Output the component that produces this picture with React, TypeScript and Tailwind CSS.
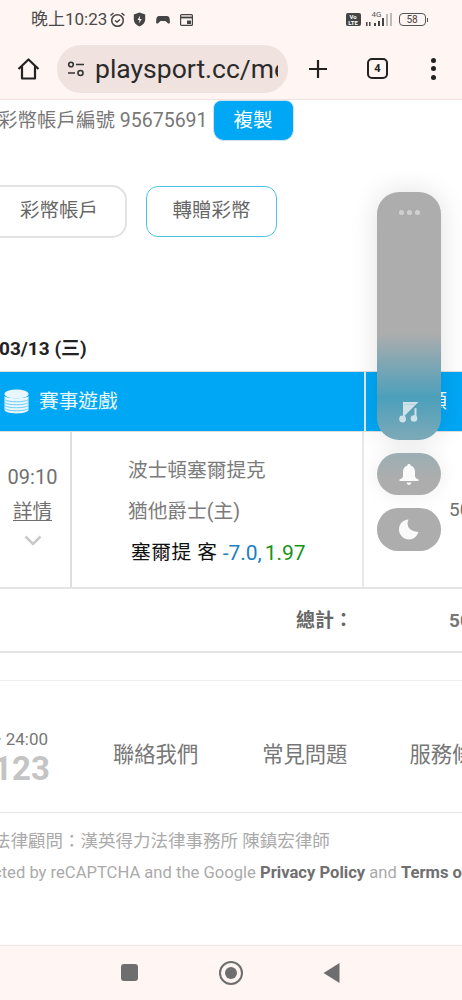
const font = "font-['Roboto','Noto_Sans_CJK_TC',sans-serif]"

function StatusBar() {
  return (
    <div className="flex h-[40px] items-center bg-[#fff5f2] pb-[1px] pl-[31px] pr-[34px] text-[#4a4a4a]">
      <span className="text-[17px] leading-none">晚上10:23</span>
      <svg className="ml-[2px]" width="17" height="17" viewBox="0 0 17 17" fill="none" stroke="#444" strokeWidth="1.5">
        <circle cx="8.5" cy="9.5" r="5.8" />
        <path d="M6 9.5l2 1.6 3-2.6M1.5 4.5L4.5 2M15.5 4.5L12.5 2" />
      </svg>
      <svg className="ml-[7px]" width="13" height="15" viewBox="0 0 13 15">
        <path d="M6.5 .5l5.7 2v5c0 3.3-2.4 5.7-5.7 7-3.3-1.3-5.700-3.700-5.700-7v-5z" fill="#444" />
        <path d="M7.200 3.500L4.500 8h2l-.7 3.500L8.800 7H6.700z" fill="#fff5f2" />
      </svg>
      <svg className="ml-[10px]" width="14" height="10" viewBox="0 0 14 10">
        <path d="M3 1h8c1.400 0 2.300 1 2.600 2.600l.3 3.400c.1 1.600-1.400 2-2.300 1L9.500 6H4.500L2.400 8c-.9 1-2.400.6-2.300-1l.3-3.400C.7 2 1.600 1 3 1z" fill="#444" />
      </svg>
      <svg className="ml-[10px]" width="13" height="12" viewBox="0 0 13 12" fill="none" stroke="#444" strokeWidth="1.200">
        <rect x=".6" y=".6" width="11.800" height="10.800" rx="1" />
        <path d="M.6 3.500h11.800" strokeWidth="1.800" />
        <path d="M7 6.500h4v3.500H7z" fill="#444" stroke="none" />
      </svg>
      <div className="ml-auto flex items-center">
        <div className="flex h-[13px] w-[15px] flex-col items-center justify-center rounded-[2px] bg-[#444] text-[6px] font-bold leading-[6px] text-white">
          <span>Vo</span>
          <span>LTE</span>
        </div>
        <div className="relative ml-[5px] h-[15px] w-[28px]">
          <span className="absolute left-[6px] top-[-2px] text-[8px] leading-[9px] text-[#555]">4G</span>
          <svg className="absolute bottom-0 left-0" width="28" height="14" viewBox="0 0 28 14" fill="#444">
            <rect x="0" y="9" width="1.500" height="4" />
            <rect x="3" y="9" width="1.500" height="4" />
            <rect x="8" y="10" width="2" height="3" />
            <rect x="12" y="8" width="2" height="5" />
            <rect x="16" y="5" width="2" height="8" />
            <rect x="20" y="1" width="2" height="12" fill="#bbb" />
            <rect x="24" y="0" width="2" height="13" fill="#bbb" />
          </svg>
        </div>
        <div className="ml-[5px] flex h-[13px] w-[27px] items-center justify-center rounded-[4px] border border-[#555] text-[10px] leading-none text-[#444]">
          58
        </div>
        <div className="ml-[1px] h-[4px] w-[1.500px] bg-[#555]" />
      </div>
    </div>
  )
}

function BrowserBar() {
  return (
    <div className="flex h-[60px] items-center border-b border-[#f0dfdc] bg-[#fff5f2] pb-[2px]">
      <svg className="ml-[17px] shrink-0" width="23" height="22" viewBox="0 0 23 22" fill="none" stroke="#222" strokeWidth="2.200" strokeLinejoin="round">
        <path d="M1.500 11L11.500 1.500 21.500 11M5 8v12.500h13V8" />
      </svg>
      <div className="ml-[17px] flex h-[48px] w-[231px] shrink-0 items-center overflow-hidden rounded-full bg-[#f0e2df] pl-[10px] pr-[10px]">
        <svg className="shrink-0" width="18" height="16" viewBox="0 0 18 16" fill="none" stroke="#333" strokeWidth="1.600">
          <circle cx="4" cy="3.500" r="2.300" />
          <path d="M9 3.500h8M1 12h7" />
          <circle cx="13.500" cy="12" r="2.500" />
        </svg>
        <div className="ml-[10px] overflow-hidden whitespace-nowrap text-[26.500px] leading-[34px] text-[#2a2a2a]">
          playsport.cc/member
        </div>
      </div>
      <svg className="ml-[20px] shrink-0" width="20" height="20" viewBox="0 0 20 20" stroke="#222" strokeWidth="2.200">
        <path d="M10 1v18M1 10h18" />
      </svg>
      <div className="ml-[39px] flex h-[21px] w-[21px] shrink-0 items-center justify-center rounded-[5px] border-2 border-[#222] text-[11px] font-bold leading-none text-[#222]">
        4
      </div>
      <div className="ml-[43px] flex shrink-0 flex-col gap-[3.500px]">
        <span className="h-[5px] w-[5px] rounded-full bg-[#222]" />
        <span className="h-[5px] w-[5px] rounded-full bg-[#222]" />
        <span className="h-[5px] w-[5px] rounded-full bg-[#222]" />
      </div>
    </div>
  )
}

function AccountRow() {
  return (
    <div className="flex h-[41px] items-center whitespace-nowrap">
      <span className="-ml-[2px] text-[19.500px] leading-[28px] text-[#777]">彩幣帳戶編號 95675691</span>
      <button className="ml-[5px] h-[41px] w-[81px] shrink-0 rounded-b-[11px] rounded-t-[8px] border border-[#cfe4ee] bg-[#00a7f5] text-[19.500px] leading-none text-white">
        複製
      </button>
    </div>
  )
}

function Tabs() {
  return (
    <div className="mt-[43px] flex h-[54px] items-center">
      <div className="-ml-[16px] flex h-[53px] w-[143px] shrink-0 items-center justify-center rounded-[15px] border-2 border-[#e2e2e2] pl-[7px] text-[19.500px] text-[#666]">
        彩幣帳戶
      </div>
      <div className="ml-[19px] flex h-[51px] w-[131px] shrink-0 items-center justify-center rounded-[12px] border border-[#4cc2e6] text-[19.500px] text-[#666]">
        轉贈彩幣
      </div>
    </div>
  )
}

function GameTable() {
  return (
    <div className="w-[520px]">
      <div className="flex h-[61px] items-center border-y border-[#dedede] bg-[#00a7f5]">
        <div className="flex w-[364px] items-center pl-[4px]">
          <svg width="25" height="25" viewBox="0 0 25 25">
            <ellipse cx="12.500" cy="5" rx="12" ry="4.500" fill="#e8f7ff" />
            <path d="M.5 7c1 3 23 3 24 0v14c-1 4.500-23 4.500-24 0z" fill="#e8f7ff" />
            <path d="M.5 10.500c3 3 21 3 24 0M.5 13.500c3 3 21 3 24 0M.5 16.500c3 3 21 3 24 0M.5 19.500c3 3 21 3 24 0" fill="none" stroke="#6ccdf8" strokeWidth="1" />
          </svg>
          <span className="ml-[10px] text-[19.700px] leading-none text-[#e9f8ff]">賽事遊戲</span>
        </div>
        <div className="h-full w-[2px] bg-[#dfe7ea]" />
        <span className="ml-[43px] text-[19px] leading-none text-white">金額</span>
      </div>
      <div className="flex h-[157px] border-b-2 border-[#e4e4e4]">
        <div className="flex w-[72px] flex-col items-center border-r-2 border-[#dfdfdf] pr-[5px] pt-[31px]">
          <span className="text-[20px] leading-[28px] text-[#707070]">09:10</span>
          <span className="mt-[8px] text-[19.500px] leading-[26px] text-[#707070] underline underline-offset-2">詳情</span>
          <svg className="mt-[10px]" width="18" height="11" viewBox="0 0 18 11" fill="none" stroke="#c9c9c9" strokeWidth="2.500">
            <path d="M1.500 1.500L9 9l7.500-7.500" />
          </svg>
        </div>
        <div className="flex w-[292px] flex-col border-r-2 border-[#e8e8e8] pl-[56px] pt-[25px] text-[19.700px]">
          <span className="leading-[28px] text-[#7b7b7b]">波士頓塞爾提克</span>
          <span className="mt-[13px] leading-[28px] text-[#7b7b7b]">猶他爵士(主)</span>
          <div className="ml-[3px] mt-[13px] flex items-center leading-[28px]">
            <span className="tracking-[0.6px] text-[#111]">塞爾提 客</span>
            <span className="ml-[5px] text-[21px] text-[#1b80c4]">-7.0,</span>
            <span className="ml-[3px] text-[21px] text-[#179317]">1.97</span>
          </div>
        </div>
        <div className="pl-[85px] pt-[64px] text-[19px] leading-[28px] text-[#707070]">500</div>
      </div>
      <div className="flex h-[64px] items-center border-b-2 border-[#e4e4e4]">
        <span className="ml-[296px] text-[19px] font-bold leading-none text-[#666]">總計：</span>
        <span className="ml-[96px] text-[19px] font-bold leading-none text-[#777]">500</span>
      </div>
    </div>
  )
}

function Footer() {
  return (
    <div className="mt-[27px] border-t border-[#efefef]">
      <div className="flex h-[132px] items-center border-b border-[#e6e6e6] pt-[16px] whitespace-nowrap">
        <div className="flex w-[50px] shrink-0 flex-col items-end overflow-hidden pt-[4px]">
          <span className="mr-[2px] text-[17px] leading-[22px] text-[#777]">~ 24:00</span>
          <span className="mt-[2px] text-[33px] font-bold leading-[34px] text-[#c4c4c4]">123</span>
        </div>
        <span className="ml-[63px] shrink-0 text-[21.300px] leading-none text-[#777]">聯絡我們</span>
        <span className="ml-[64px] shrink-0 text-[21.300px] leading-none text-[#777]">常見問題</span>
        <span className="ml-[62px] shrink-0 text-[21.300px] leading-none text-[#777]">服務條款</span>
      </div>
      <div className="-ml-[7px] mt-[17px] whitespace-nowrap text-[17.500px] leading-[22px] text-[#aaaaaa]">法律顧問：漢英得力法律事務所 陳鎮宏律師</div>
      <div className="-ml-[7px] mt-[9px] whitespace-nowrap text-[16.600px] leading-[24px] text-[#aaaaaa]">
        cted by reCAPTCHA and the Google <b className="text-[#707070]">Privacy Policy</b> and <b className="text-[#707070]">Terms of Service</b>
      </div>
    </div>
  )
}

function FloatingTools() {
  return (
    <div className="absolute left-[377px] top-[192px] flex w-[64px] flex-col gap-[13px]">
      <div className="flex h-[248px] flex-col items-center justify-between rounded-[22px] bg-[linear-gradient(180deg,#adadad_0%,#adadad_57%,#4b9fbb_83%,#7eaab7_100%)] pb-[17px] pt-[18px] shadow-[0_0_28px_rgba(0,0,0,0.12)]">
        <div className="flex gap-[3px]">
          <span className="h-[5px] w-[5px] rounded-full bg-[#d0d0d0]" />
          <span className="h-[5px] w-[5px] rounded-full bg-[#d0d0d0]" />
          <span className="h-[5px] w-[5px] rounded-full bg-[#d0d0d0]" />
        </div>
        <svg width="21" height="22" viewBox="0 0 21 22" fill="#cfe2e8">
          <path d="M4 1h15.500L4.600 15.800A3.300 3.300 0 0 0 4 15.700z" />
          <circle cx="3.600" cy="18" r="3.400" />
          <path d="M5 3.500h11.500" stroke="#b5d5de" strokeWidth="1" />
          <path d="M16.500 7.200V15.500" stroke="#cfe2e8" strokeWidth="2" />
          <circle cx="15" cy="17.500" r="3.300" />
        </svg>
      </div>
      <div className="flex h-[42px] items-center justify-center rounded-[21px] bg-[linear-gradient(180deg,#9aaeb4_0%,#adadad_60%)] shadow-[0_0_20px_rgba(0,0,0,0.08)]">
        <svg width="20" height="21" viewBox="0 0 20 21" fill="#fafafa">
          <path d="M10 0c1 0 1.700.7 1.800 1.700 2.800.8 4.200 3 4.200 6V12c0 1.200.8 2.300 3.500 3.600V17H.5v-1.400C3.200 14.300 4 13.200 4 12V7.700c0-3 1.400-5.200 4.200-6C8.300.7 9 0 10 0z" />
          <path d="M7.500 18.500h5C12.200 20 11.200 21 10 21s-2.200-1-2.500-2.500z" />
        </svg>
      </div>
      <div className="flex h-[43px] items-center justify-center rounded-[21px] bg-[#adadad]">
        <svg width="20" height="21" viewBox="0 0 20 21" fill="#fafafa">
          <path d="M9.500.5c-2.500 5-.5 12 10 12.500C18 17.500 14.500 20.500 10 20.500 4.500 20.500 0 16 0 10.500S4 .8 9.500.5z" />
        </svg>
      </div>
    </div>
  )
}

function NavBar() {
  return (
    <div className="flex h-[55px] items-center border-t border-[#f7e3e1] bg-[#fff5f3] pb-[1px]">
      <div className="ml-[121px] h-[17px] w-[17px] rounded-[3px] bg-[#6e6e6e]" />
      <div className="ml-[81px] flex h-[24px] w-[24px] items-center justify-center rounded-full border-2 border-[#6e6e6e]">
        <div className="h-[12px] w-[12px] rounded-full bg-[#6e6e6e]" />
      </div>
      <svg className="ml-[80px]" width="17" height="20" viewBox="0 0 17 20" fill="#6e6e6e">
        <path d="M16.500 0v20L.5 10z" />
      </svg>
    </div>
  )
}

export default function App() {
  return (
    <div className={`${font} relative flex h-[1000px] w-[462px] flex-col overflow-hidden bg-white`}>
      <StatusBar />
      <BrowserBar />
      <div className="flex-1 overflow-hidden">
        <AccountRow />
        <Tabs />
        <div className="-ml-[1px] mt-[99px] text-[19px] font-bold leading-[24px] text-[#222]">03/13 (三)</div>
        <div className="mt-[10px]">
          <GameTable />
        </div>
        <Footer />
      </div>
      <NavBar />
      <FloatingTools />
    </div>
  )
}
